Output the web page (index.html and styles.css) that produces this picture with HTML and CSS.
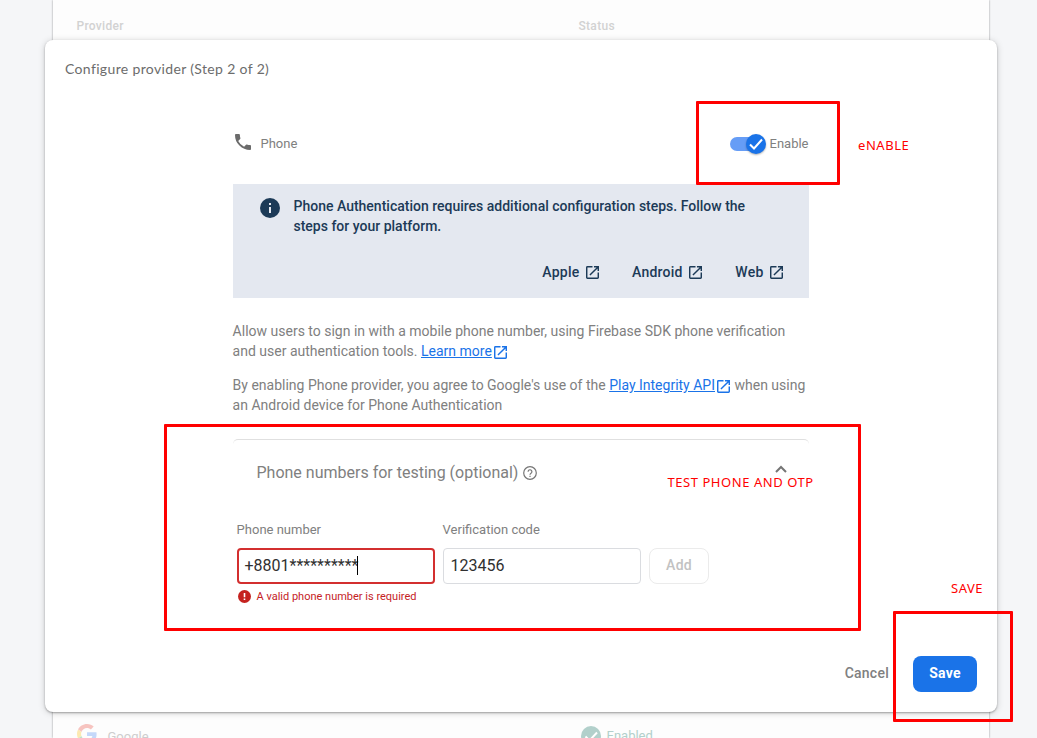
FILE: index.html
```html
<!DOCTYPE html>
<html lang="en">
<head>
<meta charset="utf-8">
<title>Configure provider</title>
<link rel="stylesheet" href="styles.css">
</head>
<body>
<svg class="defs" aria-hidden="true">
  <symbol id="open" viewBox="0 0 18 18"><path d="M16 16H2V2h7V0H2a2 2 0 0 0-2 2v14a2 2 0 0 0 2 2h14a2 2 0 0 0 2-2V9h-2v7zM11 0v2h3.600L4.750 11.830l1.410 1.410L16 3.410V7h2V0h-7z"/></symbol>
</svg>
<div class="page">
  <section class="providers">
    <div class="providers-head"><span class="col-name">Provider</span><span>Status</span></div>
    <div class="providers-row">
      <div class="col-name google">
        <svg class="google-logo" viewBox="0 0 48 48"><path fill="#ea4335" d="M24 9.500c3.540 0 6.710 1.220 9.210 3.600l6.850-6.850C35.900 2.380 30.470 0 24 0 14.620 0 6.510 5.380 2.560 13.220l7.980 6.190C12.430 13.720 17.740 9.500 24 9.500z"/><path fill="#4285f4" d="M46.980 24.550c0-1.570-.15-3.090-.38-4.550H24v9.020h12.940c-.58 2.960-2.260 5.480-4.780 7.180l7.730 6c4.510-4.180 7.090-10.360 7.090-17.650z"/><path fill="#fbbc05" d="M10.530 28.590A14.500 14.500 0 0 1 9.770 24c0-1.600.27-3.140.76-4.590l-7.980-6.190A23.900 23.900 0 0 0 0 24c0 3.880.92 7.540 2.560 10.780l7.970-6.190z"/><path fill="#34a853" d="M24 48c6.480 0 11.930-2.130 15.890-5.810l-7.730-6c-2.150 1.450-4.920 2.300-8.160 2.300-6.260 0-11.570-4.220-13.470-9.910l-7.980 6.190C6.510 42.620 14.620 48 24 48z"/></svg>
        <span>Google</span>
      </div>
      <div class="enabled">
        <svg width="20" height="20" viewBox="0 0 20 20"><circle cx="10" cy="10" r="10" fill="#b2d0cb"/><path d="M4.500 10.500l4 4 7.500-8" fill="none" stroke="#fff" stroke-width="2"/></svg>
        <span>Enabled</span>
      </div>
    </div>
  </section>

  <main class="dialog">
    <h1 class="title">Configure provider (Step 2 of 2)</h1>
    <div class="content">
      <div class="provider-line">
        <svg class="phone-icon" viewBox="3 3 18 18"><path d="M6.620 10.790a15.150 15.150 0 0 0 6.590 6.590l2.200-2.200a1 1 0 0 1 1.020-.24c1.120.37 2.330.57 3.570.57a1 1 0 0 1 1 1V20a1 1 0 0 1-1 1A17 17 0 0 1 3 4a1 1 0 0 1 1-1h3.500a1 1 0 0 1 1 1c0 1.250.2 2.450.57 3.570a1 1 0 0 1-.25 1.020l-2.200 2.200z"/></svg>
        <span class="provider-name">Phone</span>
        <div class="toggle"><div class="knob"><svg width="20" height="20" viewBox="0 0 20 20"><path d="M4 10.500l4 4 8-9" fill="none" stroke="#fff" stroke-width="2"/></svg></div></div>
        <span class="toggle-label">Enable</span>
      </div>

      <div class="banner">
        <svg class="info" width="20" height="20" viewBox="0 0 20 20"><circle cx="10" cy="10" r="10"/><path d="M9 5h2v2H9zM9 9h2v6H9z" fill="#e4e8f0"/></svg>
        <div class="banner-text">Phone Authentication requires additional configuration steps. Follow the<br>steps for your platform.</div>
        <nav class="platforms">
          <a class="apple">Apple<svg><use href="#open"/></svg></a>
          <a class="android">Android<svg><use href="#open"/></svg></a>
          <a class="web">Web<svg><use href="#open"/></svg></a>
        </nav>
      </div>

      <p class="para first">Allow users to sign in with a mobile phone number, using Firebase SDK phone verification<br>and user authentication tools. <a class="link">Learn more</a><svg class="link-icon"><use href="#open"/></svg></p>
      <p class="para second">By enabling Phone provider, you agree to Google's use of the <a class="link">Play Integrity API</a><svg class="link-icon"><use href="#open"/></svg> when using<br>an Android device for Phone Authentication</p>

      <section class="panel">
        <header class="panel-head">
          <span class="panel-title">Phone numbers for testing (optional)</span>
          <svg class="help" width="14" height="14" viewBox="0 0 14 14" fill="none" stroke="#757575"><circle cx="7" cy="7" r="6.300" stroke-width="1.200"/><path d="M5.100 5.700a1.900 1.900 0 1 1 2.900 1.600c-.7.450-1 .75-1 1.400" stroke-width="1.200"/><path d="M7 9.700v1.300" stroke-width="1.200"/></svg>
          <svg class="chevron" width="12" height="8" viewBox="0 0 12 8"><path d="M1 7l5-5 5 5" fill="none" stroke="#757575" stroke-width="2"/></svg>
        </header>
        <div class="form">
          <div class="field">
            <span class="label phone-label">Phone number</span>
            <div class="input invalid"><span class="phone-value">+8801**********</span><i class="caret"></i></div>
            <div class="error">
              <svg width="13" height="13" viewBox="0 0 13 13"><circle cx="6.500" cy="6.500" r="6.500" fill="#c5221f"/><path d="M5.700 3h1.600v4.300H5.700zM5.700 8.500h1.600V10H5.700z" fill="#fff"/></svg>
              <span>A valid phone number is required</span>
            </div>
          </div>
          <div class="field">
            <span class="label code-label">Verification code</span>
            <div class="input"><span class="code-value">123456</span></div>
          </div>
          <div class="add">Add</div>
        </div>
      </section>
    </div>
    <footer class="actions"><span class="cancel">Cancel</span><div class="save">Save</div></footer>
  </main>

  <div class="mark mark-enable"></div>
  <div class="mark mark-test"></div>
  <div class="mark mark-save"></div>
  <span class="note note-enable">eNABLE</span>
  <span class="note note-test">TEST PHONE AND OTP</span>
  <span class="note note-save">SAVE</span>
</div>
</body>
</html>
```
FILE: styles.css
```css
* { box-sizing: border-box; }
body { margin: 0; font-family: Roboto, "Liberation Sans", sans-serif; color: #808080; }
.defs { position: absolute; width: 0; height: 0; }
.page { position: relative; height: 738px; overflow: hidden; background: #f5f6f8; padding: 0 48px 0 53px; }
svg { display: block; flex: none; }
span, a { white-space: nowrap; }

.providers { height: 738px; background: #fdfdfd; box-shadow: 0 0 2px rgba(0,0,0,.4); padding: 16px 0 0 23.5px; display: flex; flex-direction: column; justify-content: space-between; }
.providers-head { display: flex; font-size: 12px; line-height: 20px; font-weight: 500; letter-spacing: .3px; color: #d2d2d2; }
.col-name { width: 502px; }
.providers-row { display: flex; height: 14px; font-size: 13px; line-height: 20px; color: #cdcdcd; }
.google, .enabled { display: flex; }
.google { gap: 11px; }
.google span { padding-top: 3px; }
.google-logo { width: 20px; height: 20px; opacity: .3; }
.enabled { gap: 6px; margin-left: 2px; padding-top: 2px; color: #b2d0cb; }

.dialog { position: absolute; left: 45px; top: 40px; width: 952px; height: 672px; background: #fff; border-radius: 8px; box-shadow: 0 1px 2px rgba(0,0,0,.3), 0 1px 7px rgba(0,0,0,.18); display: flex; flex-direction: column; padding: 19px 20px 20px; }
.title { margin: 0; font: 400 14px/20px Lato, sans-serif; letter-spacing: .35px; color: #6c6c6c; }
.content { width: 576px; margin: 54px auto 0; }
.provider-line { display: flex; align-items: center; height: 22px; font-size: 13px; padding-left: 2px; }
.phone-icon { width: 16px; height: 16px; fill: #6b6b6b; margin-top: -4px; }
.provider-name { margin: -2px 0 0 9.5px; width: 469.5px; }
.toggle { width: 34px; height: 14px; border-radius: 7px; background: #669df6; display: flex; align-items: center; justify-content: flex-end; }
.knob { flex: none; width: 20px; height: 20px; border-radius: 50%; background: #1a73e8; margin-right: -2px; box-shadow: 0 1px 2px rgba(0,0,0,.3); }
.toggle-label { margin: -2px 0 0 5.5px; }

.banner { margin-top: 29px; height: 114px; background: #e4e8f0; color: #1c3a57; display: grid; grid-template: 40px 20px / 20px 1fr; column-gap: 14px; row-gap: 26px; padding: 12px 26px 0 26.5px; font-size: 14px; line-height: 20px; font-weight: 500; }
.info { margin-top: 2px; fill: #1c3a57; }
.platforms { grid-column: 1 / 3; display: flex; justify-content: flex-end; gap: 33px; letter-spacing: .25px; }
.platforms a { display: flex; align-items: center; gap: 6.5px; }
.platforms svg { width: 13px; height: 13px; fill: currentColor; margin-top: 1px; }

.para { margin: 0 0 0 -.4px; font-size: 14px; line-height: 20px; white-space: nowrap; }
.first { margin-top: 23px; }
.second { margin-top: 14px; }
.link { color: #1a73e8; text-decoration: underline; text-underline-offset: 1px; }
.link-icon { display: inline-block; width: 13px; height: 13px; fill: #1a73e8; vertical-align: -3px; margin: 0 1px 0 2px; }

.panel { margin-top: 24px; border-top: 1px solid #e0e0e0; border-radius: 5px; }
.panel-head { display: flex; align-items: center; padding: 20px 22px 0 23.5px; height: 46px; font-size: 16px; }
.panel-title { margin-top: -2px; }
.help { margin-left: 5px; }
.chevron { margin-left: auto; margin-top: -8px; }
.form { display: flex; gap: 8px; padding: 34px 0 0 4px; }
.field { width: 198px; }
.label { display: block; height: 28px; line-height: 20px; font-size: 13px; margin-left: -.4px; }
.input { height: 36px; border: 1px solid #dadce0; border-radius: 4px; padding: 0 0 2px 6.5px; display: flex; align-items: center; font-size: 16px; color: #303030; }
.invalid { border: 2px solid #d32f2f; padding-left: 5.5px; }
.caret { width: 1px; height: 19px; background: #000; margin: 1px 0 0 -1px; }
.error { display: flex; align-items: center; gap: 5.5px; height: 24px; padding-left: 1px; font-size: 11px; color: #c5221f; }
.add { width: 60px; height: 36px; margin-top: 28px; border: 1px solid #ebebeb; border-radius: 8px; text-align: center; font-size: 14px; font-weight: 500; line-height: 33px; letter-spacing: .25px; color: #c2c2c2; }

.actions { margin-top: auto; display: flex; align-items: center; justify-content: flex-end; gap: 24px; font-size: 14px; font-weight: 500; letter-spacing: .25px; }
.cancel { margin-top: -2px; }
.save { width: 64px; height: 36px; border-radius: 8px; background: #1a73e8; color: #fff; text-align: center; line-height: 35px; font-weight: 700; }

.mark { position: absolute; border: 3px solid #f00; border-radius: 1px; }
.mark-enable { left: 696px; top: 101px; width: 144px; height: 84px; }
.mark-test { left: 164px; top: 424px; width: 697px; height: 207px; }
.mark-save { left: 893px; top: 611px; width: 120px; height: 111px; }
.note { position: absolute; font: 400 13px/18px "Noto Sans", sans-serif; letter-spacing: .55px; color: #f00; }
.note-enable { left: 858px; top: 136px; }
.note-test { left: 667.5px; top: 473px; }
.note-save { left: 951px; top: 579px; }
```
